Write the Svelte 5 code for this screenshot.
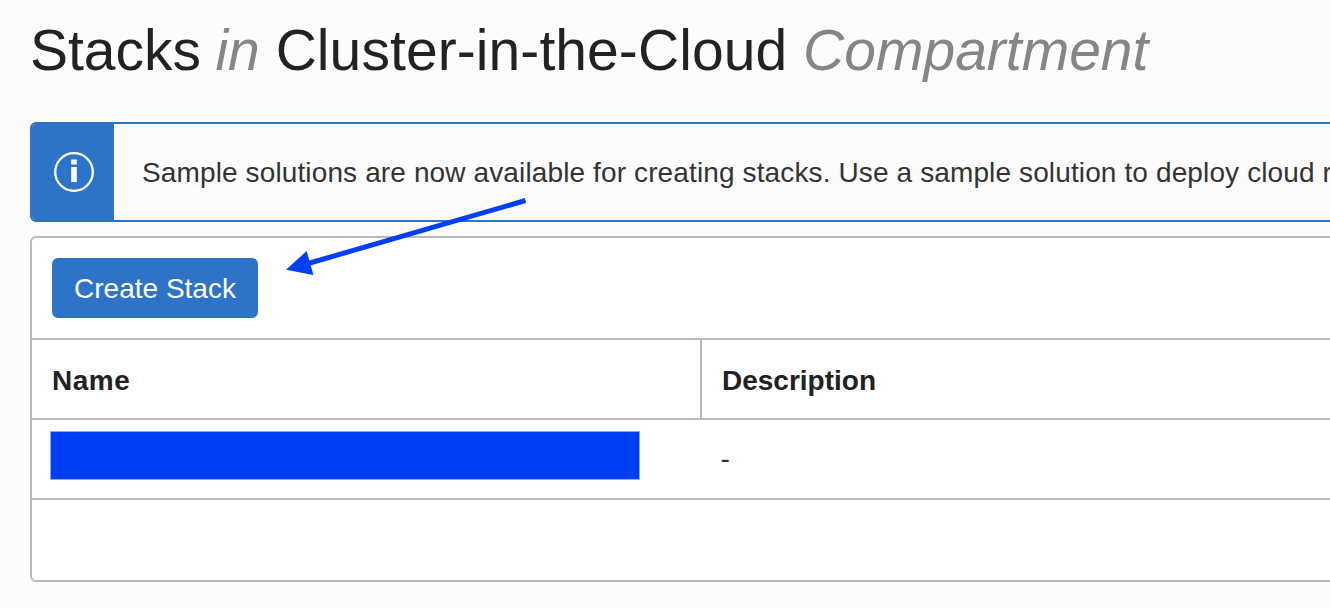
<script>
  const columns = ['Name', 'Description'];
</script>

<main class="page">
  <h1><span>Stacks</span> <em class="in">in</em> <span class="compartment">Cluster-in-the-Cloud</span> <em>Compartment</em></h1>

  <section class="notice">
    <div class="badge">
      <svg width="40" height="40" viewBox="0 0 40 40" aria-hidden="true">
        <circle cx="20" cy="20" r="18.8" fill="none" stroke="#fff" stroke-width="2.3" />
        <path d="M17.2 7.5h5.6v5h-5.6zM17.2 15h5.6v15h-5.6z" fill="#fff" />
      </svg>
    </div>
    <p>Sample solutions are now available for creating stacks. Use a sample solution to deploy cloud r</p>
  </section>

  <section class="panel">
    <div class="toolbar"><button>Create Stack</button></div>
    <div class="row head">
      {#each columns as column}
        <div class="cell {column.toLowerCase()}">{column}</div>
      {/each}
    </div>
    <div class="row">
      <div class="cell masked"><div class="redacted"></div></div>
      <div class="cell dash">-</div>
    </div>
    <div class="footer"></div>
  </section>

  <svg class="arrow" width="1330" height="608" viewBox="0 0 1330 608" aria-hidden="true">
    <path d="M525.5 200.5L308 263.5" stroke="#003ff5" stroke-width="5" fill="none" />
    <path d="M286 269.7L306.7 251L313.4 275z" fill="#003ff5" />
  </svg>
</main>

<style>
  :global(body) {
    background: #fcfcfc;
    overflow: hidden;
  }

  .page {
    position: relative;
    box-sizing: border-box;
    width: 1330px;
    height: 608px;
    padding-left: 30px;
    overflow: hidden;
    font: 28px/40px 'Liberation Sans', sans-serif;
    color: #333;
  }

  h1 {
    margin: 0;
    height: 122px;
    padding-top: 12px;
    box-sizing: border-box;
    font-size: 57px;
    font-weight: 400;
    line-height: 76px;
    white-space: nowrap;
    color: #222;
  }

  em {
    color: #858585;
  }

  .in {
    margin-left: -1.5px;
  }

  .compartment {
    letter-spacing: 0.08px;
  }

  .notice {
    display: flex;
    width: 1360px;
    height: 100px;
    box-sizing: border-box;
    border: 2px solid #2d73c8;
    border-radius: 6px;
    overflow: hidden;
    margin-bottom: 14px;
  }

  .badge {
    display: flex;
    flex: none;
    align-items: center;
    width: 82px;
    padding-left: 22px;
    box-sizing: border-box;
    background: #2d73c8;
  }

  p {
    margin: 0;
    padding: 29px 0 0 28px;
    letter-spacing: 0.125px;
    white-space: nowrap;
  }

  .panel {
    width: 1360px;
    height: 346px;
    box-sizing: border-box;
    border: 2px solid #b6b9c0;
    border-radius: 6px;
    background: #fff;
  }

  .toolbar {
    height: 100px;
    padding: 20px;
    box-sizing: border-box;
  }

  button {
    display: block;
    width: 206px;
    height: 60px;
    padding: 2px 0 0;
    border: 0;
    border-radius: 6px;
    background: #2d73c8;
    color: #fff;
    font: inherit;
  }

  .row {
    display: grid;
    grid-template-columns: 668px 1fr;
    height: 80px;
    box-sizing: border-box;
    border-top: 2px solid #b6b9c0;
  }

  .head {
    font-weight: 700;
    color: #222;
  }

  .cell {
    padding: 21px 20px 0;
  }

  .name {
    letter-spacing: 0.5px;
  }

  .masked {
    padding: 11px 0 0 18px;
  }

  .description {
    border-left: 2px solid #b6b9c0;
  }

  .dash {
    padding-top: 19px;
    padding-left: 20.5px;
  }

  .redacted {
    box-sizing: border-box;
    width: 590px;
    height: 49px;
    border: 1px solid #8ba8fa;
    background: #003ff5;
  }

  .footer {
    border-top: 2px solid #b6b9c0;
  }

  .arrow {
    position: absolute;
    left: 0;
    top: 0;
  }
</style>
